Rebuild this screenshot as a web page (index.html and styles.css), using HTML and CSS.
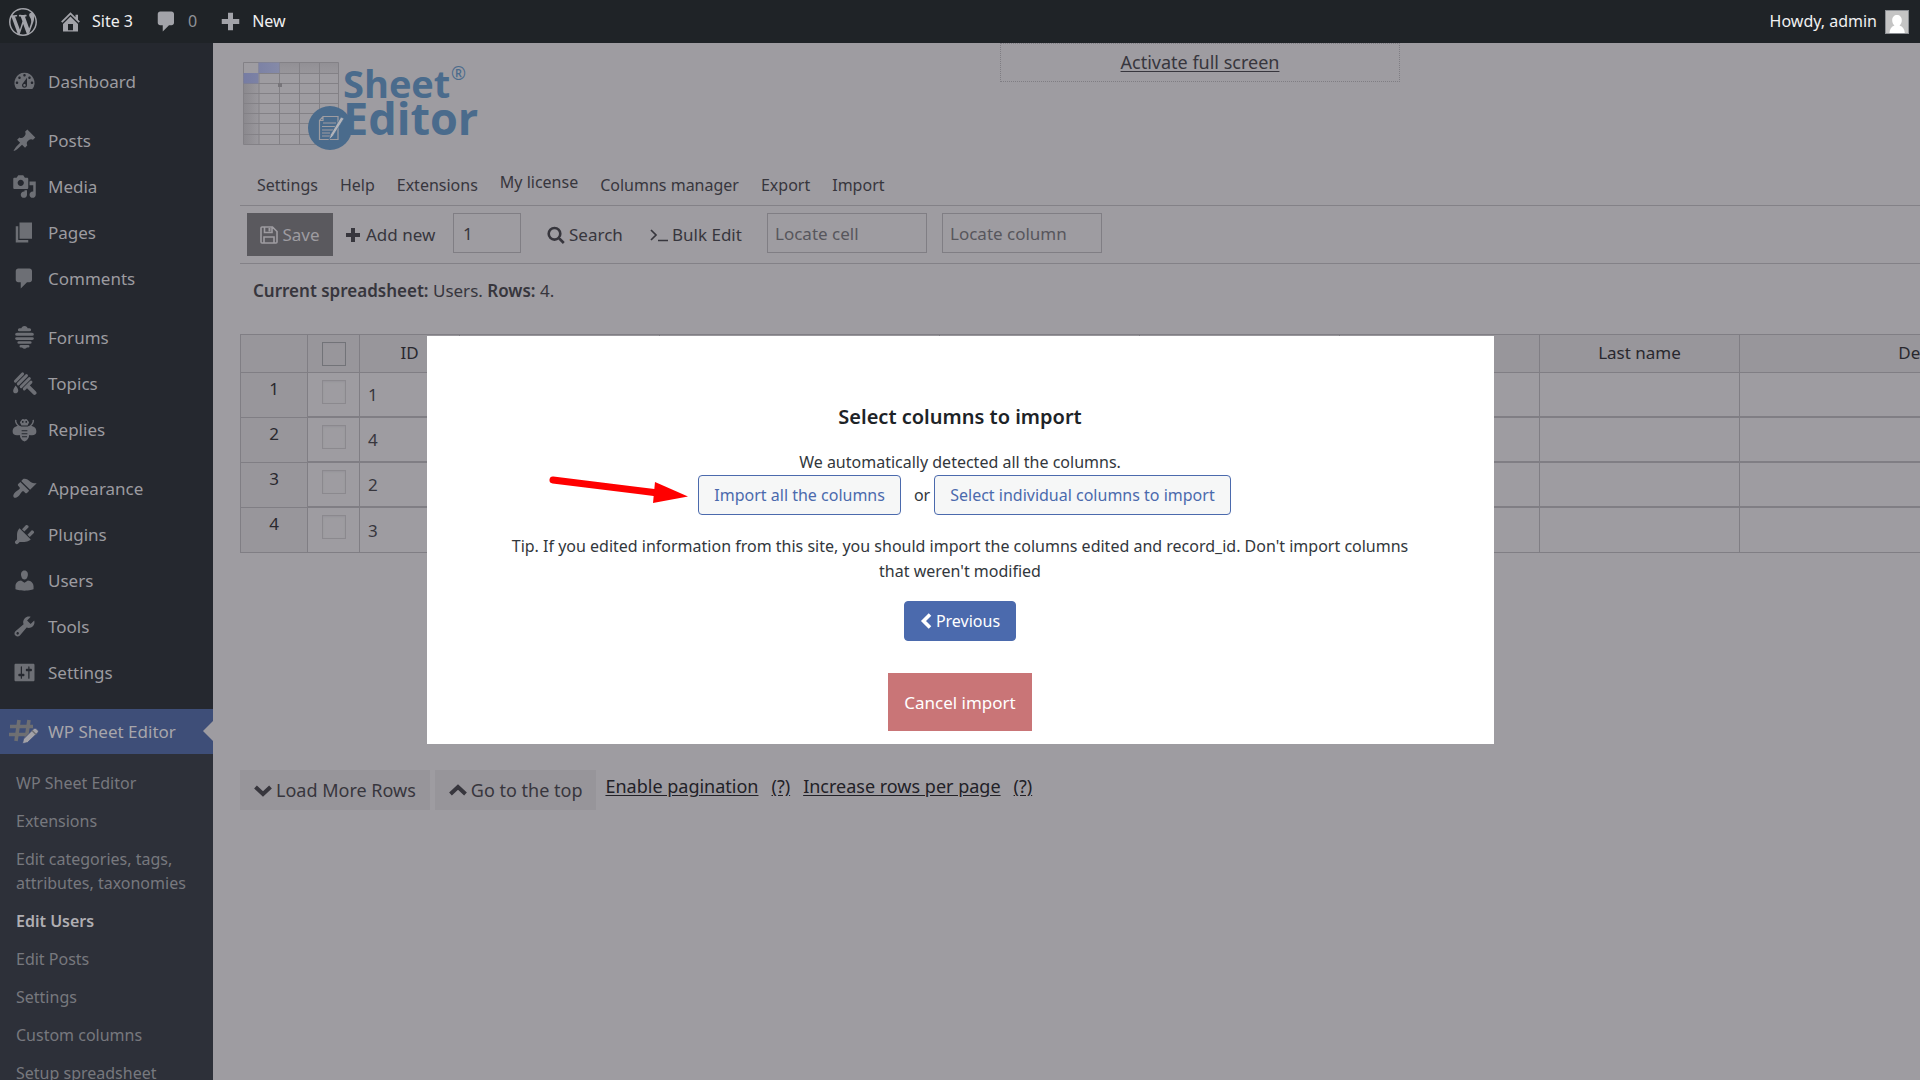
FILE: index.html
```html
<!DOCTYPE html>
<html lang="en">
<head>
<meta charset="utf-8">
<title>Edit Users - WP Sheet Editor</title>
<link rel="stylesheet" href="styles.css">
</head>
<body>
<header class="adminbar">
  <a class="bar-item" href="#" aria-label="WordPress"><svg class="bar-wp" viewBox="0 0 20 20"><path d="M20 10c0-5.51-4.49-10-10-10C4.48 0 0 4.49 0 10c0 5.52 4.48 10 10 10 5.51 0 10-4.48 10-10zM7.78 15.37L4.37 6.22c.55-.02 1.17-.08 1.17-.08.5-.06.44-1.13-.06-1.11 0 0-1.45.11-2.37.11-.18 0-.37 0-.58-.01C4.12 2.69 6.87 1.11 10 1.11c2.33 0 4.45.87 6.05 2.34-.68-.11-1.65.39-1.65 1.58 0 .74.45 1.36.9 2.1.35.61.55 1.36.55 2.46 0 1.49-1.4 5-1.4 5l-3.03-8.37c.54-.02.82-.17.82-.17.5-.05.44-1.25-.06-1.22 0 0-1.44.12-2.38.12-.87 0-2.33-.12-2.33-.12-.5-.03-.56 1.2-.06 1.22l.92.08 1.26 3.41zM17.41 10c.24-.64.74-1.87.43-4.25.7 1.29 1.05 2.71 1.05 4.25 0 3.29-1.73 6.24-4.4 7.78.97-2.59 1.94-5.2 2.92-7.78zM6.1 18.09C3.12 16.65 1.11 13.53 1.11 10c0-1.3.23-2.48.72-3.59C3.25 10.3 4.67 14.2 6.1 18.09zm4.03-6.63l2.58 6.98c-.86.29-1.76.45-2.71.45-.79 0-1.57-.11-2.29-.33.81-2.38 1.62-4.74 2.42-7.1z"/></svg></a>
  <a class="bar-item" href="#"><svg class="icon" viewBox="0 0 20 20"><path d="M16 8.5l1.53 1.53-1.06 1.06L10 4.6l-6.47 6.49-1.06-1.06L10 2.5l4 4v-2h2v4zm-6-2.46l6 5.99V18H4v-5.97zM12 17v-5H8v5h4z"/></svg>Site 3</a>
  <a class="bar-item bar-comments" href="#"><svg class="icon" viewBox="0 0 20 20"><path d="M5 2h9c1.1 0 2 .9 2 2v7c0 1.1-.9 2-2 2h-2l-5 5v-5H5c-1.1 0-2-.9-2-2V4c0-1.1.9-2 2-2z"/></svg><span>0</span></a>
  <a class="bar-item" href="#"><svg class="icon" viewBox="0 0 20 20"><path d="M17 8v4h-5v5H8v-5H3V8h5V3h4v5z"/></svg>New</a>
  <a class="bar-user" href="#">Howdy, admin
    <svg class="avatar" viewBox="0 0 24 24"><rect width="24" height="24" fill="#8c8f94"/><rect x="1" y="1" width="22" height="22" fill="#c4c4c4"/><path fill="#fff" d="M4.500 23c.3-4.200 1.700-6.500 5-7.600-1.500-1.300-2.300-3-2.300-5.200C7.200 7 9.200 5 12 5s4.800 2 4.800 5.200c0 2.200-.8 3.900-2.300 5.200 3.300 1.100 5 3.400 5.300 7.600z"/></svg></a>
</header>
<div class="shell">
  <nav class="sidebar" aria-label="Main menu">
    <ul class="menu">
      <li><a href="#"><svg class="icon" viewBox="0 0 20 20"><path fill-rule="evenodd" d="M3.760 16h12.480A7.998 7.998 0 0010 3a7.998 7.998 0 00-6.240 13zM10 4c.55 0 1 .45 1 1s-.45 1-1 1-1-.45-1-1 .45-1 1-1zM6 6c.55 0 1 .45 1 1s-.45 1-1 1-1-.45-1-1 .45-1 1-1zm8 0c.55 0 1 .45 1 1s-.45 1-1 1-1-.45-1-1 .45-1 1-1zm-5.370 5.550L12 7v6c0 1.100-.9 2-2 2s-2-.9-2-2c0-.57.24-1.080.63-1.450zM4 10c.55 0 1 .45 1 1s-.45 1-1 1-1-.45-1-1 .45-1 1-1zm12 0c.55 0 1 .45 1 1s-.45 1-1 1-1-.45-1-1 .45-1 1-1zm-5 3c0-.55-.45-1-1-1s-1 .45-1 1 .45 1 1 1 1-.45 1-1z"/></svg>Dashboard</a></li>
    </ul>
    <ul class="menu">
      <li><a href="#"><svg class="icon" viewBox="0 0 20 20"><path d="M10.440 3.020l1.820-1.820 6.360 6.350-1.830 1.820c-1.050-.68-2.480-.57-3.410.36l-.75.75c-.92.93-1.040 2.350-.35 3.410l-1.830 1.820-2.410-2.410-2.800 2.790c-.42.42-3.380 2.710-3.800 2.290s1.860-3.390 2.280-3.810l2.790-2.790L4.100 9.360l1.830-1.820c1.050.69 2.480.57 3.400-.36l.75-.75c.93-.92 1.050-2.350.36-3.410z"/></svg>Posts</a></li>
      <li><a href="#"><svg class="icon" viewBox="0 0 20 20"><path fill-rule="evenodd" d="M13 11V4c0-.55-.45-1-1-1h-1.670L9 1H5L3.670 3H2c-.55 0-1 .45-1 1v7c0 .55.45 1 1 1h10c.55 0 1-.45 1-1zM7 4.500c1.380 0 2.500 1.120 2.500 2.500S8.380 9.500 7 9.500 4.500 8.380 4.500 7 5.620 4.500 7 4.500zM14 6h5v10.500c0 1.380-1.120 2.500-2.500 2.500S14 17.880 14 16.500s1.120-2.500 2.500-2.500c.17 0 .34.02.5.05V9h-3V6zm-4 8.050V13h2v3.500c0 1.380-1.120 2.500-2.500 2.500S7 17.880 7 16.500 8.120 14 9.500 14c.17 0 .34.02.5.05z"/></svg>Media</a></li>
      <li><a href="#"><svg class="icon" viewBox="0 0 20 20"><path d="M6 15V2h10v13H6zm-1 1h8v2H3V5h2v11z"/></svg>Pages</a></li>
      <li><a href="#"><svg class="icon" viewBox="0 0 20 20"><path d="M5 2h9c1.100 0 2 .9 2 2v7c0 1.100-.9 2-2 2h-2l-5 5v-5H5c-1.100 0-2-.9-2-2V4c0-1.100.9-2 2-2z"/></svg>Comments</a></li>
    </ul>
    <ul class="menu">
      <li><a href="#"><svg class="icon" viewBox="0 0 20 20"><path d="M8 1.500q2-1.500 4 0l.5 1.100H14q1.300 0 1.300 1.200T14 5H6Q4.700 5 4.700 3.800T6 2.600h1.500zM4 6.200h12q1.500 0 1.500 1.200T16 8.600H4q-1.500 0-1.500-1.200T4 6.200zM3.800 9.700h12.400q1.300 0 1.300 1.100t-1.300 1.100H3.800q-1.300 0-1.300-1.100t1.300-1.100zM5.500 13h9q1.200 0 1.200 1t-1.200 1h-9q-1.200 0-1.200-1t1.200-1zM7 16h6q1 0 1 .9t-1 1l-1 .1q-2 2-4 0l-1-.1q-1-.1-1-1T7 16z"/></svg>Forums</a></li>
      <li><a href="#"><svg class="icon" viewBox="0 0 20 20"><g fill="none" stroke="currentColor" stroke-linecap="round"><path stroke-width="2.300" d="M2.700 8.200l5.800-5.900M5 10.300L11.600 3.700M7.300 12.600l6.600-6.600M9.800 14.300l5.400-5.400"/><path stroke-width="3.200" d="M13 12.500l5 5"/></g><path d="M2.800 11.500c2 2.200 2.500 3.400 2.100 4.900-.5 1.800-3.400 2-3.900.1-.4-1.500.8-3 1.800-5z"/></svg>Topics</a></li>
      <li><a href="#"><svg class="icon" viewBox="0 0 20 20"><path fill-rule="evenodd" d="M7.500 2.500Q8.500.8 10 2q1.500-1.200 2.500.5l1.200 1.700-1.200 2.500h-5L6.300 4.200zM8 3.200v1.300h1.200V3.200zm2.800 0v1.300H12V3.200zM7 7.500h6c4-1 6.500 1.200 6.500 4 0 2.500-2 3.700-5.700 2.800-.3 2.700-1.300 4.200-3.800 5.200-2.500-1-3.500-2.500-3.800-5.200C2.500 15.200.5 14 .5 11.500c0-2.800 2.500-5 6.500-4zm.7 3v.9h4.600v-.9zm0 2.400v.9h4.600v-.9zm.3 2.400v.9h4v-.9z"/><path fill="none" stroke="currentColor" stroke-width="1.100" d="M3 2.300C2.500 5 4 6.500 7 8.300M17 2.300c.5 2.700-1 4.200-4 6"/></svg>Replies</a></li>
    </ul>
    <ul class="menu">
      <li><a href="#"><svg class="icon" viewBox="0 0 20 20"><path d="M14.480 11.060L7.410 3.990l1.500-1.500c.5-.56 2.300-.47 3.510.32 1.210.8 1.430 1.280 2.910 2.100 1.180.64 2.450 1.260 4.450.85zm-.71.71L6.700 4.700 4.930 6.470c-.39.39-.39 1.020 0 1.410l1.060 1.060c.39.39.39 1.030 0 1.420-.6.6-1.430 1.110-2.210 1.690-.35.26-.7.53-1.010.84C1.430 14.230.4 16.080 1.400 17.070c.99 1 2.840-.03 4.180-1.360.31-.31.58-.66.85-1.020.57-.78 1.080-1.610 1.690-2.210.39-.39 1.020-.39 1.410 0l1.060 1.060c.39.39 1.020.39 1.410 0z"/></svg>Appearance</a></li>
      <li><a href="#"><svg class="icon" viewBox="0 0 20 20"><path d="M13.110 4.360L9.870 7.600 8 5.730l3.240-3.240c.35-.34 1.050-.2 1.560.32.52.51.66 1.210.31 1.550zm-8 1.770l.91-1.120 9.010 9.010-1.190.84c-.71.71-2.630 1.160-3.820 1.160H6.140L4.900 17.260c-.59.59-1.540.59-2.120 0-.59-.58-.59-1.530 0-2.120l1.240-1.240v-3.880c0-1.130.4-3.190 1.090-3.890zm7.260 3.970l3.240-3.240c.34-.35 1.040-.21 1.550.31.52.51.66 1.210.31 1.550l-3.240 3.250z"/></svg>Plugins</a></li>
      <li><a href="#"><svg class="icon" viewBox="0 0 20 20"><path d="M10 9.250c-2.270 0-2.730-3.440-2.730-3.440C7 4.020 7.820 2 9.970 2c2.160 0 2.980 2.020 2.710 3.810 0 0-.41 3.440-2.680 3.440zm0 2.570L12.720 10c2.390 0 4.520 2.330 4.520 4.530v2.490s-3.650 1.130-7.240 1.130c-3.650 0-7.240-1.130-7.240-1.130v-2.490c0-2.250 1.940-4.480 4.470-4.480z"/></svg>Users</a></li>
      <li><a href="#"><svg class="icon" viewBox="0 0 20 20"><path fill-rule="evenodd" d="M16.680 9.770c-1.340 1.340-3.300 1.670-4.950.99l-5.410 6.520c-.99.99-2.590.99-3.580 0s-.99-2.590 0-3.570l6.520-5.420c-.68-1.650-.35-3.610.99-4.950 1.280-1.280 3.120-1.620 4.720-1.060l-2.890 2.890 2.820 2.820 2.860-2.870c.53 1.580.18 3.390-1.080 4.650zM3.810 16.210c.4.39 1.040.39 1.430 0 .4-.4.4-1.040 0-1.430-.39-.4-1.030-.4-1.430 0-.39.39-.39 1.030 0 1.430z"/></svg>Tools</a></li>
      <li><a href="#"><svg class="icon" viewBox="0 0 20 20"><path fill-rule="evenodd" d="M18 16V4c0-.55-.45-1-1-1H3c-.55 0-1 .45-1 1v12c0 .55.45 1 1 1h14c.55 0 1-.45 1-1zM8 11h1c.55 0 1 .45 1 1s-.45 1-1 1H8v1.500c0 .28-.22.5-.5.5s-.5-.22-.5-.5V13H6c-.55 0-1-.45-1-1s.45-1 1-1h1V5.500c0-.28.22-.5.5-.5s.5.22.5.5V11zm5-2h-1c-.55 0-1-.45-1-1s.45-1 1-1h1V5.500c0-.28.22-.5.5-.5s.5.22.5.5V7h1c.55 0 1 .45 1 1s-.45 1-1 1h-1v5.500c0 .28-.22.5-.5.5s-.5-.22-.5-.5V9z"/></svg>Settings</a></li>
    </ul>
    <ul class="menu">
      <li class="current">
        <a href="#"><svg class="icon icon-sheet" viewBox="0 0 30 25"><path fill="none" stroke="#6e6f72" stroke-width="3.600" d="M10 1L7 22M20 1l-3 20M1 7.500h23M0 15.500h20"/><path fill="#a3a2a7" stroke="#3e4d77" stroke-width=".8" d="M14.500 20L25 9.500q1-.8 2 0l2 2q.8 1 0 2L18.500 23.500l-5 1.300z"/><path fill="#6e6f72" d="M22.500 12l4 4 1-1-4-4z"/></svg>WP Sheet Editor</a>
        <ul class="submenu">
          <li><a href="#">WP Sheet Editor</a></li>
          <li><a href="#">Extensions</a></li>
          <li><a href="#">Edit categories, tags, attributes, taxonomies</a></li>
          <li><a class="active" href="#">Edit Users</a></li>
          <li><a href="#">Edit Posts</a></li>
          <li><a href="#">Settings</a></li>
          <li><a href="#">Custom columns</a></li>
          <li><a href="#">Setup spreadsheet</a></li>
        </ul>
      </li>
    </ul>
  </nav>
  <main class="content">
    <header class="page-head">
      <svg class="logo" viewBox="0 0 240 92" role="img" aria-label="Sheet Editor">
        <defs>
          <linearGradient id="headShade" x2="0" y2="1"><stop offset="0" stop-color="#929095"/><stop offset="1" stop-color="#98969b"/></linearGradient>
          <linearGradient id="sideShade"><stop offset="0" stop-color="#8b898e"/><stop offset="1" stop-color="#9a989d"/></linearGradient>
          <linearGradient id="blueShade"><stop offset="0" stop-color="#767ca3"/><stop offset="1" stop-color="#858aa8"/></linearGradient>
        </defs>
        <rect x="16" y="1" width="80" height="10" fill="url(#headShade)"/>
        <rect x="1" y="21" width="15" height="61" fill="url(#sideShade)"/>
        <path fill="none" stroke="#838186" d="M.5.5h95v82H.500zM16 .5v82M36.500.5v82M56.500.5v82M76.500.5v82M.5 11.500h95M.5 21.500h95M.5 31.500h95M.5 41.500h95M.5 51.500h95M.5 61.500h95M.5 72.500h95"/>
        <path fill="url(#blueShade)" d="M15.500.5h21v10.500h-21zM.5 11h15v10.500H.500z"/>
        <rect x="35" y="21" width="4" height="4" fill="#77757a"/>
        <circle cx="87" cy="66" r="22" fill="#4a6b8c"/>
        <path fill="none" stroke="#9e9ca1" stroke-width="1.200" d="M80 54.500h15v23H76.500v-19zM80 54.500v4h-3.500M80 61h13M79 64.500h13M79 68h11M79 71h8M79 74h8"/>
        <path fill="#b3b4ba" stroke="#4a6b8c" stroke-width=".7" d="M98 55l3 1.500L90 74l-4 4 1.500-5.500z"/>
        <text class="logo-top" x="100" y="36">Sheet</text>
        <text class="logo-bottom" x="100" y="73">Editor</text>
        <text class="logo-mark" x="208" y="18">®</text>
      </svg>
      <div class="fullscreen"><a href="#">Activate full screen</a></div>
    </header>
    <nav class="tabs" aria-label="Spreadsheet menu">
      <a href="#">Settings</a><a href="#">Help</a><a href="#">Extensions</a><a class="raised" href="#">My license</a><a href="#">Columns manager</a><a href="#">Export</a><a href="#">Import</a>
    </nav>
    <div class="toolbar">
      <button class="save" type="button"><svg class="glyph" viewBox="0 0 18 18"><path fill="none" stroke="currentColor" stroke-width="1.600" d="M1 2q0-1 1-1h10.500L17 5.500V16q0 1-1 1H2q-1 0-1-1zM4.500 1v5.500h7.500V1M4 17v-6h10v6"/><path d="M8.500 2h2v3.500h-2z"/></svg>Save</button>
      <button class="add" type="button"><svg class="glyph" viewBox="0 0 18 18"><path d="M7 2h4v5h5v4h-5v5H7v-5H2V7h5z"/></svg>Add new</button>
      <input class="count" type="text" value="1" aria-label="Number of rows">
      <button class="search" type="button"><svg class="glyph" viewBox="0 0 18 18"><path fill="none" stroke="currentColor" stroke-width="2.600" d="M13.300 7.800a5.800 5.800 0 1 1-11.600 0 5.800 5.800 0 0 1 11.600 0zM11.800 12l5 5"/></svg>Search</button>
      <button class="bulk" type="button"><svg class="glyph" viewBox="0 0 18 18"><path fill="none" stroke="currentColor" stroke-width="1.700" d="M1 4l5 5-5 5M8 14.500h10"/></svg>Bulk Edit</button>
      <input class="locate" type="text" placeholder="Locate cell" aria-label="Locate cell">
      <input class="locate" type="text" placeholder="Locate column" aria-label="Locate column">
    </div>
    <p class="summary"><strong>Current spreadsheet:</strong> Users. <strong>Rows:</strong> 4.</p>
    <div class="sheet-wrap">
      <table class="sheet">
        <colgroup><col class="c-num"><col class="c-check"><col class="c-id"><col class="c-md"><col class="c-lg"><col class="c-md"><col class="c-md"><col class="c-md"><col class="c-md"><col class="c-xl"></colgroup>
        <thead><tr><th></th><th class="check"><input type="checkbox" aria-label="Select all"></th><th>ID</th><th></th><th></th><th></th><th></th><th></th><th>Last name</th><th>Description</th></tr></thead>
        <tbody>
          <tr><th>1</th><td class="check"><input type="checkbox" aria-label="Select row 1"></td><td>1</td><td></td><td></td><td></td><td></td><td></td><td></td><td></td></tr>
          <tr><th>2</th><td class="check"><input type="checkbox" aria-label="Select row 2"></td><td>4</td><td></td><td></td><td></td><td></td><td></td><td></td><td></td></tr>
          <tr><th>3</th><td class="check"><input type="checkbox" aria-label="Select row 3"></td><td>2</td><td></td><td></td><td></td><td></td><td></td><td></td><td></td></tr>
          <tr><th>4</th><td class="check"><input type="checkbox" aria-label="Select row 4"></td><td>3</td><td></td><td></td><td></td><td></td><td></td><td></td><td></td></tr>
        </tbody>
      </table>
    </div>
    <footer class="sheet-foot">
      <button type="button"><svg class="glyph" viewBox="0 0 18 18"><path fill="none" stroke="currentColor" stroke-width="4" d="M1.500 6L9 13l7.500-7"/></svg>Load More Rows</button>
      <button type="button"><svg class="glyph" viewBox="0 0 18 18"><path fill="none" stroke="currentColor" stroke-width="4" d="M1.500 13L9 6l7.500 7"/></svg>Go to the top</button>
      <p class="foot-links"><a href="#">Enable pagination</a><a href="#">(?)</a><a href="#">Increase rows per page</a><a href="#">(?)</a></p>
    </footer>
  </main>
</div>
<div class="overlay">
  <section class="modal" role="dialog" aria-labelledby="modal-title">
    <h2 id="modal-title">Select columns to import</h2>
    <p>We automatically detected all the columns.</p>
    <div class="choices">
      <button class="outline" type="button">Import all the columns</button>
      <span>or</span>
      <button class="outline" type="button">Select individual columns to import</button>
    </div>
    <p class="tip">Tip. If you edited information from this site, you should import the columns edited and record_id. Don't import columns that weren't modified</p>
    <button class="primary" type="button"><svg viewBox="0 0 12 16"><path fill="none" stroke="currentColor" stroke-width="3.600" d="M10 1.500L3.500 8l6.500 6.500"/></svg>Previous</button>
    <button class="cancel" type="button">Cancel import</button>
    <svg class="pointer" viewBox="0 0 140 30"><path stroke="#f00" stroke-width="7" stroke-linecap="round" d="M5 7.500L106 20"/><path fill="#f00" d="M107 9.500L140 24l-35 6.500z"/></svg>
  </section>
</div>
</body>
</html>
```
FILE: styles.css
```css
* { box-sizing: border-box; }
body {
  margin: 0;
  height: 100vh;
  overflow: hidden;
  display: flex;
  flex-direction: column;
  background: #9e9ca1;
  color: #37363d;
  font: 16px/25px "Noto Sans", "Open Sans", sans-serif;
}
ul { list-style: none; margin: 0; padding: 0; }
p, h2 { margin: 0; }
a { color: inherit; text-decoration: none; }
button, input { font: inherit; color: inherit; margin: 0; border-radius: 0; }
svg { fill: currentColor; flex: none; display: block; }
.icon { width: 25px; height: 25px; }

/* Admin bar */
.adminbar {
  flex: none;
  height: 43px;
  padding: 0 11px 0 9px;
  display: flex;
  align-items: center;
  gap: 21px;
  background: #1f2327;
  color: #f0f0f1;
}
.bar-item { display: flex; align-items: center; gap: 9px; }
.bar-item svg { color: #a2a3a9; }
.bar-wp { width: 28px; height: 28px; }
.bar-comments { color: #8f9298; }
.bar-user { margin-left: auto; display: flex; align-items: center; gap: 8px; }
.avatar { width: 24px; height: 24px; }

/* Sidebar */
.shell { flex: 1; min-height: 0; display: flex; }
.sidebar {
  flex: none;
  width: 213px;
  padding-top: 16px;
  display: flex;
  flex-direction: column;
  gap: 14px;
  background: #25282f;
  color: #9c9ba0;
  font-size: 17px;
}
.menu { display: flex; flex-direction: column; gap: 1px; }
.menu > li > a { display: flex; align-items: center; gap: 11px; height: 45px; padding-left: 12px; }
.menu .icon { color: #6d6f75; }
.current > a { position: relative; background: #3e4e78; color: #a8a6ab; }
.menu > li.current > a { padding-left: 9px; gap: 9px; }
.menu .icon-sheet { width: 30px; }
.current > a::after {
  content: "";
  position: absolute;
  right: 0;
  top: 12px;
  border: 10px solid transparent;
  border-left-width: 0;
  border-right-color: #9e9ca1;
}
.submenu { padding-top: 10px; background: #2d3039; color: #77787e; font-size: 16px; line-height: 24px; }
.submenu a { display: block; padding: 7px 16px; }
.submenu .active { color: #b0aeb3; font-weight: 600; }

/* Page */
.content { flex: 1; min-width: 0; overflow: hidden; padding-left: 27px; font-size: 17px; }
.page-head { display: grid; grid-template-columns: 760px 400px; align-items: start; }
.logo { width: 240px; height: 92px; margin: 19px 0 0 3px; fill: #4a6b8c; }
.logo-top { font: 700 38px "Open Sans", sans-serif; }
.logo-bottom { font: 700 45px "Open Sans", sans-serif; }
.logo-mark { font: 400 18px "Open Sans", sans-serif; }
.fullscreen { height: 39px; padding-top: 6px; border: 1px dotted #7f7d83; text-align: center; font-size: 18px; }
.fullscreen a, .foot-links a { text-decoration: underline; text-underline-offset: 2px; }
.tabs { display: flex; gap: 22px; padding: 19px 0 7px 17px; border-bottom: 1px solid #838187; font-size: 16px; }
.raised { margin-top: -3px; }
.toolbar {
  display: flex;
  align-items: flex-start;
  height: 58px;
  padding: 7px 0 0 7px;
  border-bottom: 1px solid #838187;
}
.toolbar button, .sheet-foot button { display: flex; align-items: center; gap: 4px; border: 0; padding: 0; background: none; height: 43px; white-space: nowrap; }
.glyph { width: 18px; height: 18px; }
.toolbar .save { width: 86px; justify-content: center; background: #5a595e; color: #9e9ca1; }
.toolbar .add { width: 120px; padding-left: 11px; }
.toolbar .search { width: 103px; margin-left: 26px; }
.toolbar .bulk { width: 117px; }
.toolbar input { height: 40px; padding: 0 7px; border: 1px solid #807e84; background: transparent; outline: 0; }
.toolbar .count { width: 68px; padding-left: 9px; }
.locate { width: 160px; }
.locate + .locate { margin-left: 15px; }
::placeholder { color: #57565c; opacity: 1; }
.summary { padding: 14px 0 0 13px; }
.summary strong { font-weight: 600; }

/* Spreadsheet */
.sheet-wrap { margin-top: 31px; overflow: hidden; }
.sheet { table-layout: fixed; width: 1909px; border-spacing: 0; border-top: 1px solid #807e84; border-left: 1px solid #807e84; }
.c-num { width: 67px; }
.c-check { width: 52px; }
.c-id { width: 100px; }
.c-md { width: 200px; }
.c-lg { width: 280px; }
.c-xl { width: 409px; }
.sheet th, .sheet td { padding: 0 8px; height: 45px; border-right: 1px solid #807e84; border-bottom: 1px solid #807e84; font-weight: 400; }
.sheet th { background: #98969b; color: #29282e; }
.sheet thead th { height: 38px; padding-bottom: 2px; }
.sheet tbody th { vertical-align: top; padding-top: 3px; }
.sheet td { border-bottom-width: 2px; }
.sheet tr:last-child td { border-bottom-width: 1px; }
.check input {
  appearance: none;
  display: block;
  width: 24px;
  height: 24px;
  margin: 0 auto;
  border: 1px solid #8b898e;
  box-shadow: inset 0 1px 2px #95939a;
}
.sheet thead .check { padding: 0; }
thead .check input { border-color: #727378; }
.sheet td.check { vertical-align: top; padding: 7px 0 0; }

.sheet-foot { margin-top: 217px; display: flex; align-items: flex-start; gap: 5px; font-size: 18px; }
.sheet-foot button { height: 40px; padding: 0 14px; background: #97959a; }
.foot-links { display: flex; gap: 13px; padding: 4px 0 0 4px; color: #222127; }

/* Import dialog */
.overlay { position: fixed; inset: 0; display: flex; align-items: center; justify-content: center; }
.modal {
  position: relative;
  width: 1067px;
  padding: 67px 72px 13px;
  display: flex;
  flex-direction: column;
  align-items: center;
  background: #fff;
  color: #32373c;
  text-align: center;
}
.modal h2 { font-size: 20px; line-height: 28px; font-weight: 600; color: #1d2327; margin-bottom: 19px; }
.modal p { line-height: 25px; }
.choices { display: flex; align-items: center; gap: 4px; margin-left: 9px; }
.choices span { margin-left: 9px; }
.modal button { height: 40px; padding: 0 15px; border: 1px solid #4b6aad; border-radius: 4px; }
.modal .outline { background: #f6f7f7; color: #4b6aad; }
.tip { margin-top: 19px; }
.modal .primary { display: flex; align-items: center; gap: 4px; margin-top: 17px; background: #4b6aad; color: #fff; }
.primary svg { width: 12px; height: 16px; }
.modal .cancel { height: 58px; padding: 0 16px; margin-top: 32px; border: 0; border-radius: 0; background: #c97577; color: #fff; font-size: 17px; }
.pointer { position: absolute; left: 121px; top: 136px; width: 140px; height: 31px; }
```
